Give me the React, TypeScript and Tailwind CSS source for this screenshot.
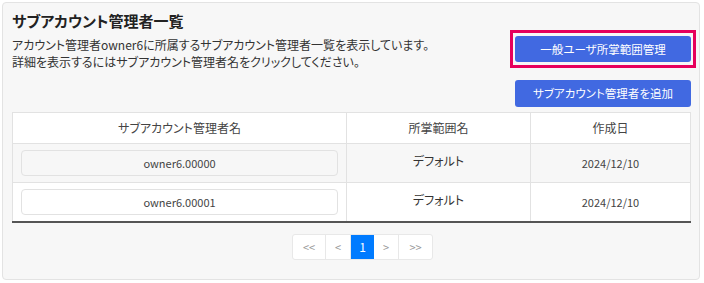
import React from 'react'

const font = "font-['Noto_Sans_CJK_JP','Noto_Sans',sans-serif] [font-feature-settings:'palt']"

const rows = [
  { name: 'owner6.00000', scope: 'デフォルト', date: '2024/12/10' },
  { name: 'owner6.00001', scope: 'デフォルト', date: '2024/12/10' },
]

export default function App() {
  return (
    <div className={`w-[704px] h-[283px] bg-white pt-[2px] pl-[2px] ${font}`}>
      <div className="w-[698px] h-[278px] bg-[#f7f7f7] border border-[#e3e3e3] rounded-[4px] pl-[9px] pr-[8px] pt-[7px]">
        {/* Header */}
        <div className="flex justify-between items-start">
          <div>
            <h1 className="text-[15px] leading-[22px] font-bold text-[#222]">サブアカウント管理者一覧</h1>
            <p className="mt-[4px] text-[12px] leading-[17px] text-[#333]">
              アカウント管理者owner6に所属するサブアカウント管理者一覧を表示しています。
              <br />
              詳細を表示するにはサブアカウント管理者名をクリックしてください。
            </p>
          </div>
          <div className="flex flex-col mt-[26px]">
            <button className="relative w-[176px] h-[26px] rounded-[3px] bg-[#4169e1] text-white text-[11.5px] leading-[26px]">
              一般ユーザ所掌範囲管理
              <span className="absolute -inset-x-[5px] -inset-y-[6px] border-[3px] border-[#e6005c] pointer-events-none" />
            </button>
            <button className="mt-[18px] w-[176px] h-[27px] rounded-[3px] bg-[#4169e1] text-white text-[11.5px] leading-[27px]">
              サブアカウント管理者を追加
            </button>
          </div>
        </div>

        {/* Table */}
        <table className="mt-[5px] w-[678px] table-fixed border-collapse text-[#333]">
          <colgroup>
            <col className="w-[334px]" />
            <col className="w-[184px]" />
            <col className="w-[160px]" />
          </colgroup>
          <thead>
            <tr className="bg-white h-[31px]">
              <th className="border border-[#e2e2e2] font-normal text-[12px] text-[#444]">サブアカウント管理者名</th>
              <th className="border border-[#e2e2e2] font-normal text-[12px] text-[#444]">所掌範囲名</th>
              <th className="border border-[#e2e2e2] font-normal text-[12px] text-[#444]">作成日</th>
            </tr>
          </thead>
          <tbody className="border-b-2 border-[#555]">
            {rows.map((r, i) => (
              <tr key={r.name} className={i % 2 === 0 ? 'bg-[#f7f7f7]' : 'bg-white'}>
                <td className="border-x border-t border-[#e2e2e2] px-[8px] pt-[6px] pb-[6px]">
                  <div className="h-[26px] rounded-[4px] border border-[#e2e2e2] text-center text-[11px] leading-[24px] text-[#444]">
                    {r.name}
                  </div>
                </td>
                <td className="border-x border-t border-[#e2e2e2] text-center text-[12px] text-[#333] pb-[4px]">{r.scope}</td>
                <td className="border-x border-t border-[#e2e2e2] text-center text-[11px] text-[#444]">{r.date}</td>
              </tr>
            ))}
          </tbody>
        </table>

        {/* Pagination */}
        <div className="mt-[11px] flex justify-center pl-[22px]">
          <div className="flex h-[26px] border border-[#e8e8e8] rounded-[3px] bg-white text-[11px] text-[#999]">
            <span className="w-[33px] flex items-center justify-center border-r border-[#e8e8e8]">&lt;&lt;</span>
            <span className="w-[25px] flex items-center justify-center border-r border-[#e8e8e8]">&lt;</span>
            <span className="w-[23px] flex items-center justify-center bg-[#007bff] text-white text-[12px]">1</span>
            <span className="w-[25px] flex items-center justify-center border-r border-[#e8e8e8]">&gt;</span>
            <span className="w-[33px] flex items-center justify-center">&gt;&gt;</span>
          </div>
        </div>
      </div>
    </div>
  )
}
